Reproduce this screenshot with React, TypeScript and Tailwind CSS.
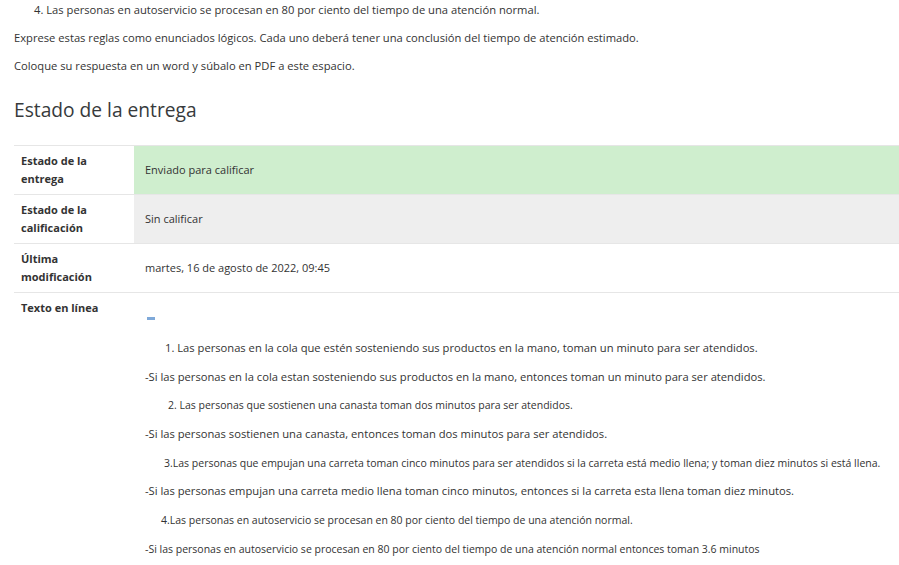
import React from "react";

type Row = {
  label: string[];
  value: string;
  bg: string;
};

const rows: Row[] = [
  { label: ["Estado de la", "entrega"], value: "Enviado para calificar", bg: "bg-[#cfeece]" },
  { label: ["Estado de la", "calificación"], value: "Sin calificar", bg: "bg-[#eeeeee]" },
  { label: ["Última", "modificación"], value: "martes, 16 de agosto de 2022, 09:45", bg: "bg-white" },
];

// pasted answer text: some lines came in a bit bigger than others
const lines: { text: string; cls: string }[] = [
  { text: "1. Las personas en la cola que estén sosteniendo sus productos en la mano, toman un minuto para ser atendidos.", cls: "pl-[20px] text-[11.2px]" },
  { text: "-Si las personas en la cola estan sosteniendo sus productos en la mano, entonces toman un minuto para ser atendidos.", cls: "pl-0 text-[11.2px]" },
  { text: "2. Las personas que sostienen una canasta toman dos minutos para ser atendidos.", cls: "pl-[23px] text-[10.5px]" },
  { text: "-Si las personas sostienen una canasta, entonces toman dos minutos para ser atendidos.", cls: "pl-0 text-[11.2px]" },
  { text: "3.Las personas que empujan una carreta toman cinco minutos para ser atendidos si la carreta está medio llena; y toman diez minutos si está llena.", cls: "pl-[19px] text-[10.5px]" },
  { text: "-Si las personas empujan una carreta medio llena toman cinco minutos, entonces si la carreta esta llena toman diez minutos.", cls: "pl-0 text-[11.2px]" },
  { text: "4.Las personas en autoservicio se procesan en 80 por ciento del tiempo de una atención normal.", cls: "pl-[16px] text-[10.5px]" },
  { text: "-Si las personas en autoservicio se procesan en 80 por ciento del tiempo de una atención normal entonces toman 3.6 minutos", cls: "pl-0 text-[10.5px]" },
];

export default function App() {
  return (
    <div className="w-[899px] h-[565px] overflow-hidden bg-white text-[#333] text-[11px] font-['Open_Sans',sans-serif]">
      <div className="pl-[14px] pt-[2px]">
        <p className="pl-[20px] leading-[16px] mb-[12px] text-[11.2px]">
          4. Las personas en autoservicio se procesan en 80 por ciento del tiempo de una atención normal.
        </p>
        <p className="leading-[16px] mb-[12px] text-[11.2px]">
          Exprese estas reglas como enunciados lógicos. Cada uno deberá tener una conclusión del tiempo de atención estimado.
        </p>
        <p className="leading-[16px] mb-[12px] text-[11.2px]">Coloque su respuesta en un word y súbalo en PDF a este espacio.</p>
        <h3 className="text-[19.2px] leading-[28px] text-[#373a3c] mt-[22px] mb-[21px]">Estado de la entrega</h3>

        <div className="border-t border-[#e6e6e6]">
          {rows.map((r) => (
            <div key={r.value} className="flex border-b border-[#e6e6e6]">
              <div className="w-[120px] shrink-0 px-[7px] py-[6px] font-bold leading-[18px]">
                <div>{r.label[0]}</div>
                <div>{r.label[1]}</div>
              </div>
              <div className={`flex-1 flex items-center px-[11px] ${r.bg}`}>{r.value}</div>
            </div>
          ))}
          <div className="flex">
            <div className="w-[120px] shrink-0 px-[7px] py-[6px] font-bold leading-[18px]">Texto en línea</div>
            <div className="flex-1 px-[11px] pt-[24px]">
              <div className="ml-[2px] w-[8px] h-[3px] bg-[#7fa9d9] mb-[20px]" />
              {lines.map((l) => (
                <p key={l.text} className={`${l.cls} leading-[16px] mb-[12.7px] whitespace-nowrap`}>
                  {l.text}
                </p>
              ))}
            </div>
          </div>
        </div>
      </div>
    </div>
  );
}
